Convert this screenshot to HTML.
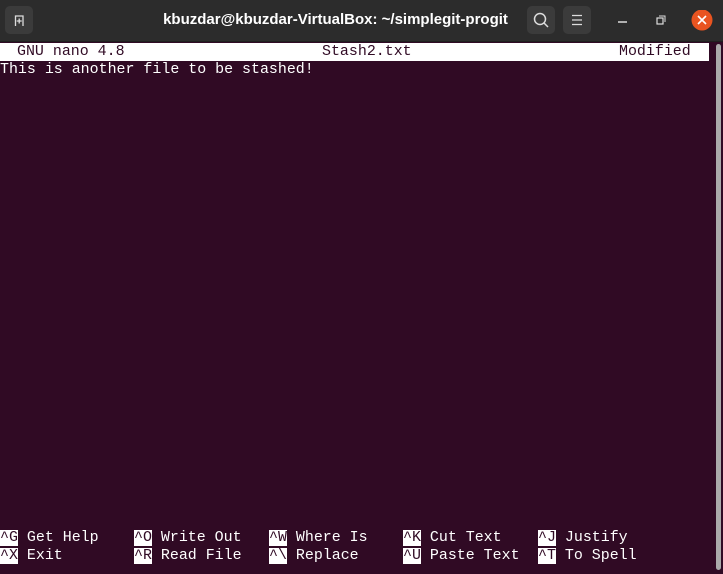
<!DOCTYPE html>
<html><head><meta charset="utf-8"><style>
*{margin:0;padding:0;box-sizing:border-box}
html,body{width:723px;height:574px;overflow:hidden;background:#300a24}
#tb{position:absolute;left:0;top:0;width:723px;height:42px;background:#2c2c2c;border-bottom:1px solid #1f1f1f}
.btn{position:absolute;top:6px;width:28px;height:28px;background:#3b3b3b;border-radius:5px}
#title{position:absolute;top:0;left:0;width:723px;height:41px;text-align:center;color:#fff;font:bold 15px "Liberation Sans",sans-serif;line-height:40px;padding-right:52px}
.t{position:absolute;height:18px;line-height:19px;font-family:"Liberation Mono",monospace;font-size:14.95px;color:#fff;white-space:pre}
.hl{background:#fff;color:#300a24}
#hdr{position:absolute;left:0;top:43px;width:709px;height:18px;background:#fff}
#sb{position:absolute;left:716px;top:44px;width:5px;height:526px;background:#aaa;border-radius:3px}
</style></head><body>
<div id="tb">
<div class="btn" style="left:5px"><svg width="28" height="28"><path d="M10.5 20V10H18V20" fill="none" stroke="#ddd" stroke-width="1.3"/><path d="M14.2 12.5v5M11.7 15h5" stroke="#ddd" stroke-width="1.3"/></svg></div>
<div id="title">kbuzdar@kbuzdar-VirtualBox: ~/simplegit-progit</div>
<div class="btn" style="left:527px"><svg width="28" height="28"><circle cx="13" cy="13" r="5.5" fill="none" stroke="#ddd" stroke-width="1.5"/><path d="M17 17l4 4" stroke="#ddd" stroke-width="1.5"/></svg></div>
<div class="btn" style="left:563px"><svg width="28" height="28"><path d="M9 9.5h10M9 14h10M9 18.5h10" stroke="#ddd" stroke-width="1.3"/></svg></div>
<svg style="position:absolute;left:615px;top:10px" width="110" height="22"><path d="M3 12h9" stroke="#ddd" stroke-width="1.5"/><rect x="42" y="8" width="6" height="6" fill="none" stroke="#ddd" stroke-width="1.2"/><path d="M44 6h6v6" fill="none" stroke="#ddd" stroke-width="1"/><circle cx="87" cy="10" r="10.5" fill="#e95420"/><path d="M83 6l8 8M91 6l-8 8" stroke="#fff" stroke-width="1.6"/></svg>
</div>
<div id="hdr"></div>
<div class="t" style="top:43px;left:17px;color:#300a24">GNU nano 4.8</div>
<div class="t" style="top:43px;left:322px;color:#300a24">Stash2.txt</div>
<div class="t" style="top:43px;left:619px;color:#300a24">Modified</div>
<div class="t" style="top:61px;left:0">This is another file to be stashed!</div>

<div class="t" style="top:529px;left:0"><span class="hl">^G</span> Get Help</div>
<div class="t" style="top:529px;left:134px"><span class="hl">^O</span> Write Out</div>
<div class="t" style="top:529px;left:269px"><span class="hl">^W</span> Where Is</div>
<div class="t" style="top:529px;left:403px"><span class="hl">^K</span> Cut Text</div>
<div class="t" style="top:529px;left:538px"><span class="hl">^J</span> Justify</div>
<div class="t" style="top:547px;left:0"><span class="hl">^X</span> Exit</div>
<div class="t" style="top:547px;left:134px"><span class="hl">^R</span> Read File</div>
<div class="t" style="top:547px;left:269px"><span class="hl">^\</span> Replace</div>
<div class="t" style="top:547px;left:403px"><span class="hl">^U</span> Paste Text</div>
<div class="t" style="top:547px;left:538px"><span class="hl">^T</span> To Spell</div>
<div id="sb"></div>
</body></html>
